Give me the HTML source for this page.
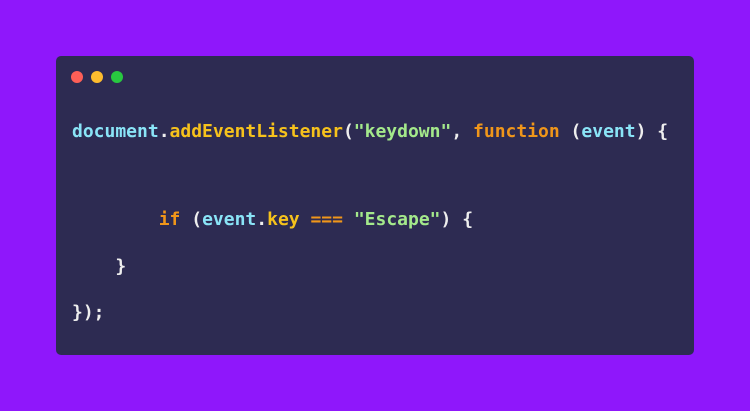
<!DOCTYPE html>
<html><head><meta charset="utf-8"><style>
html,body{margin:0;padding:0;width:750px;height:411px;background:#8f17fb;overflow:hidden}
.card{position:absolute;left:56px;top:56px;width:638px;height:299px;background:#2d2b52;border-radius:5px}
.dot{position:absolute;top:15px;width:12px;height:12px;border-radius:50%}
.l{position:absolute;left:16px;font-family:"DejaVu Sans Mono","Liberation Mono",monospace;font-size:18px;font-weight:bold;white-space:pre;color:#eeeeee;line-height:24px}
.c{color:#8ae4f7}.y{color:#f6c21c}.o{color:#f0961a}.g{color:#a4e98b}.w{color:#eeeeee}
</style></head><body>
<div class="card">
<div class="dot" style="left:15px;background:#fe5f57"></div>
<div class="dot" style="left:35px;background:#febc2e"></div>
<div class="dot" style="left:55px;background:#28c840"></div>
<div class="l" style="top:64px"><span class="c">document</span>.<span class="y">addEventListener</span>(<span class="g">"keydown"</span>, <span class="o">function</span> (<span class="c">event</span>) {</div>
<div class="l" style="top:152px">        <span class="o">if</span> (<span class="c">event</span>.<span class="y">key</span> <span class="o">===</span> <span class="g">"Escape"</span>) {</div>
<div class="l" style="top:199px">    }</div>
<div class="l" style="top:245px">});</div>
</div>
</body></html>
